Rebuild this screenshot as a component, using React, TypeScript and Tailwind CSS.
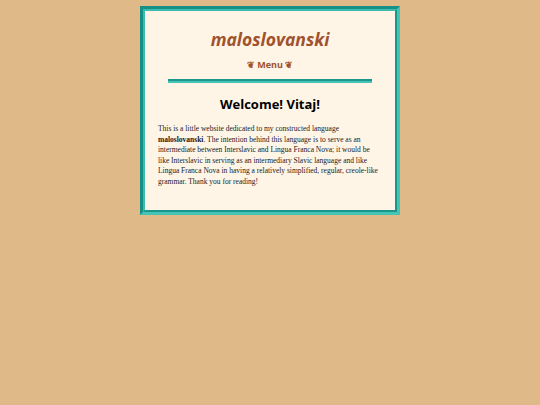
export default function App() {
  return (
    <div className="min-h-[405px] bg-[#e0b988] pt-[6px]">
      <div className="mx-auto w-[260px] border-[3px] border-t-[#168f85] border-l-[#168f85] border-r-[#45c4b6] border-b-[#45c4b6]">
        <div className="border-[2px] border-t-[#3bbcae] border-l-[#3bbcae] border-r-[#1a978c] border-b-[#1a978c] bg-[#fff5e7] px-[13px] pb-[22px]">
          <h1 className="pt-[16px] text-center font-['Open_Sans',sans-serif] text-[17.5px] font-bold italic leading-[24px] text-[#a0522d]">
            maloslovanski
          </h1>
          <div className="mt-[8px] text-center font-['Open_Sans',sans-serif] text-[9px] font-bold leading-[12px] text-[#a0522d]">
            ❦ Menu ❦
          </div>
          <div className="mx-[10px] mt-[8px] h-[4px] border-t-[2px] border-b-[2px] border-t-[#1a978c] border-b-[#45c4b6]" />
          <h2 className="mt-[12px] text-center font-['Open_Sans',sans-serif] text-[13px] font-bold leading-[18px] text-black">
            Welcome! Vitaj!
          </h2>
          <p className="mt-[11px] font-['Liberation_Serif',serif] text-[7.5px] leading-[10.6px] text-[#1a1a1a]">
            This is a little website dedicated to my constructed language <b>maloslovanski</b>. The intention behind this language is to serve as an intermediate between Interslavic and Lingua Franca Nova; it would be like Interslavic in serving as an intermediary Slavic language and like Lingua Franca Nova in having a relatively simplified, regular, creole-like grammar. Thank you for reading!
          </p>
        </div>
      </div>
    </div>
  )
}
